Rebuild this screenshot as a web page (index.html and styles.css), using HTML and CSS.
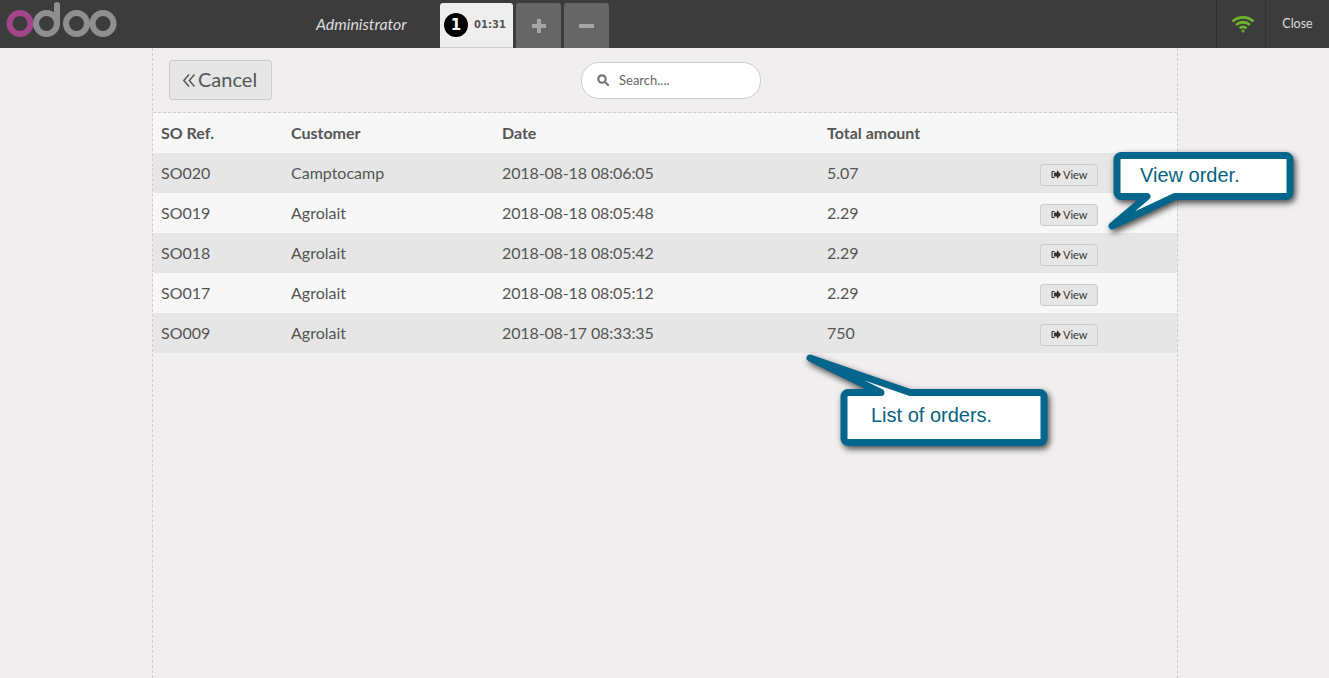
FILE: index.html
```html
<!DOCTYPE html>
<html lang="en">
<head>
<meta charset="UTF-8" />
<title>Orders</title>
<link rel="stylesheet" href="styles.css">
</head>
<body>

<header class="topbar">
  <svg class="logo" width="120" height="48" viewBox="0 0 120 48">
    <circle cx="20" cy="23.500" r="10.500" fill="none" stroke="#a24689" stroke-width="6"/>
    <circle cx="46.500" cy="23.500" r="10.500" fill="none" stroke="#8f8f8f" stroke-width="6"/>
    <line x1="57" y1="24" x2="57" y2="5" stroke="#8f8f8f" stroke-width="6" stroke-linecap="round"/>
    <circle cx="76.500" cy="23.500" r="10.500" fill="none" stroke="#8f8f8f" stroke-width="6"/>
    <circle cx="103" cy="23.500" r="10.500" fill="none" stroke="#8f8f8f" stroke-width="6"/>
  </svg>
  <span class="username">Administrator</span>
  <div class="tabs">
    <div class="tab tab-active">
      <span class="tab-num">1</span>
      <span class="tab-time">01:31</span>
    </div>
    <div class="tab tab-btn">
      <svg width="14" height="14" viewBox="0 0 14 14"><path d="M5 0h4v5h5v4H9v5H5V9H0V5h5z" fill="#a5a5a5"/></svg>
    </div>
    <div class="tab tab-btn">
      <svg width="15" height="14" viewBox="0 0 15 14"><path d="M0 5h15v4H0z" fill="#a5a5a5"/></svg>
    </div>
  </div>
  <div class="status">
    <svg width="24" height="18" viewBox="0 0 24 18" fill="none" stroke="#6bb52c" stroke-width="2.800">
      <path d="M1.500 6.500c6-5.500 15-5.500 21 0"/>
      <path d="M5 10c4-3.700 10-3.700 14 0"/>
      <path d="M8.500 13.300c2-1.800 5-1.800 7 0"/>
      <circle cx="12" cy="16" r="1.500" fill="#6bb52c" stroke="none"/>
    </svg>
  </div>
  <div class="close">Close</div>
</header>

<main class="screen">
  <div class="screen-top">
    <button class="btn-cancel">
      <svg width="12" height="13" viewBox="0 0 12 13" fill="none" stroke="#555" stroke-width="1.500"><path d="M6 .5.800 6.500 6 12.500M11.500.5 6.300 6.500l5.200 6"/></svg>
      <span>Cancel</span>
    </button>
    <div class="search">
      <svg width="12" height="12" viewBox="0 0 12 12" fill="none" stroke="#777" stroke-width="2.200"><circle cx="5" cy="5" r="3.700"/><path d="m8 8 3.200 3.200" stroke-linecap="round"/></svg>
      <span>Search....</span>
    </div>
  </div>

  <table class="orders">
    <thead>
      <tr><th class="c-ref">SO Ref.</th><th class="c-cust">Customer</th><th class="c-date">Date</th><th class="c-total">Total amount</th><th></th></tr>
    </thead>
    <tbody>
      <tr><td>SO020</td><td>Camptocamp</td><td>2018-08-18 08:06:05</td><td>5.07</td>
        <td><button class="btn-view"><svg class="ico-view" width="10" height="9" viewBox="0 0 10 9"><path d="M3.500 1H1.500a1 1 0 0 0-1 1v5a1 1 0 0 0 1 1h2V7H1.700V2h1.800zM6 0l4 4.500L6 9V6.500H3v-4h3z" fill="#333"/></svg>View</button></td></tr>
      <tr><td>SO019</td><td>Agrolait</td><td>2018-08-18 08:05:48</td><td>2.29</td>
        <td><button class="btn-view"><svg class="ico-view" width="10" height="9" viewBox="0 0 10 9"><path d="M3.500 1H1.500a1 1 0 0 0-1 1v5a1 1 0 0 0 1 1h2V7H1.700V2h1.800zM6 0l4 4.500L6 9V6.500H3v-4h3z" fill="#333"/></svg>View</button></td></tr>
      <tr><td>SO018</td><td>Agrolait</td><td>2018-08-18 08:05:42</td><td>2.29</td>
        <td><button class="btn-view"><svg class="ico-view" width="10" height="9" viewBox="0 0 10 9"><path d="M3.500 1H1.500a1 1 0 0 0-1 1v5a1 1 0 0 0 1 1h2V7H1.700V2h1.800zM6 0l4 4.500L6 9V6.500H3v-4h3z" fill="#333"/></svg>View</button></td></tr>
      <tr><td>SO017</td><td>Agrolait</td><td>2018-08-18 08:05:12</td><td>2.29</td>
        <td><button class="btn-view"><svg class="ico-view" width="10" height="9" viewBox="0 0 10 9"><path d="M3.500 1H1.500a1 1 0 0 0-1 1v5a1 1 0 0 0 1 1h2V7H1.700V2h1.800zM6 0l4 4.500L6 9V6.500H3v-4h3z" fill="#333"/></svg>View</button></td></tr>
      <tr><td>SO009</td><td>Agrolait</td><td>2018-08-17 08:33:35</td><td>750</td>
        <td><button class="btn-view"><svg class="ico-view" width="10" height="9" viewBox="0 0 10 9"><path d="M3.500 1H1.500a1 1 0 0 0-1 1v5a1 1 0 0 0 1 1h2V7H1.700V2h1.800zM6 0l4 4.500L6 9V6.500H3v-4h3z" fill="#333"/></svg>View</button></td></tr>
    </tbody>
  </table>
</main>

<!-- annotation callouts over the page -->
<svg class="callouts" width="1329" height="678" viewBox="0 0 1329 678">
  <path class="callout" d="M1121 155.500h165a4 4 0 0 1 4 4v33a4 4 0 0 1-4 4H1175L1112 226l35-29.500h-26a4 4 0 0 1-4-4v-33a4 4 0 0 1 4-4z"/>
  <text class="callout-text" x="1140" y="182">View order.</text>
  <path class="callout" d="M881 392.500 810 358l100 34.500h130a4 4 0 0 1 4 4v42a4 4 0 0 1-4 4H848a4 4 0 0 1-4-4v-42a4 4 0 0 1 4-4z"/>
  <text class="callout-text" x="871" y="422">List of orders.</text>
</svg>

</body>
</html>
```

FILE: styles.css
```css
/* page */
html, body { margin: 0; padding: 0; height: 100%; overflow: hidden; }
body { background: #f0eeee; font-family: Lato, "Open Sans", sans-serif; color: #555; }

/* top bar */
.topbar { display: flex; align-items: stretch; height: 48px; background: #3c3c3c; }
.logo { flex: none; display: block; }
.username { margin-left: 196px; width: 124px; padding-bottom: 2px; align-self: center; font-size: 15.900px; font-style: italic; color: #ddd; }
.tabs { display: flex; gap: 3px; padding-top: 3px; }
.tab { display: flex; align-items: center; justify-content: center; border-radius: 3px 3px 0 0; }
.tab-active { width: 73px; gap: 6px; padding-right: 3px; box-sizing: border-box; background: #eee; border-bottom: 1px solid #ccc; }
.tab-num { width: 24px; height: 24px; border-radius: 50%; background: #000; color: #fff; font: bold 15px/24px "DejaVu Sans", sans-serif; text-align: center; }
.tab-time { margin-top: -2px; font: bold 10px "DejaVu Sans", sans-serif; color: #555; }
.tab-btn { width: 45px; background: #666; }
.status { margin-left: auto; width: 50px; padding-left: 4px; box-sizing: border-box; display: flex; align-items: center; justify-content: center; border-left: 1px solid #2f2f2f; border-right: 1px solid #2f2f2f; }
.close { width: 63px; line-height: 47px; text-align: center; font-size: 12.500px; color: #ddd; }

/* centered screen with dashed sides */
.screen { box-sizing: border-box; width: 1026px; height: 630px; margin-left: 152px; border-left: 1px dashed #ccc; border-right: 1px dashed #ccc; }
.screen-top { display: flex; align-items: center; height: 64px; padding-left: 16px; border-bottom: 1px dashed #ccc; }
.btn-cancel { display: flex; align-items: center; gap: 3px; width: 103px; height: 40px; padding: 0 0 0 13px; box-sizing: border-box; background: #e6e6e6; border: 1px solid #ccc; border-radius: 3px; font: 20px Lato, sans-serif; color: #555; }
.btn-cancel span { margin-top: -2px; }
.search { display: flex; align-items: center; gap: 10px; box-sizing: border-box; width: 180px; height: 37px; margin-left: 309px; padding-left: 15px; background: #fff; border: 1px solid #ccc; border-radius: 18px; font-size: 13px; color: #666; }

/* orders table */
.orders { width: 100%; border-collapse: collapse; table-layout: fixed; font-size: 16px; }
.orders th, .orders td { box-sizing: border-box; height: 40px; padding: 0 0 2px 8px; text-align: left; }
.orders th { font-weight: bold; background: #f7f7f7; }
.orders tbody tr:nth-child(odd) { background: #e6e6e6; }
.orders tbody tr:nth-child(even) { background: #f7f7f7; }
.orders td:nth-child(3) { letter-spacing: -.12px; }
.c-ref { width: 130px; }
.c-cust { width: 211px; }
.c-date { width: 325px; }
.c-total { width: 213px; }
.btn-view { display: flex; align-items: center; gap: 2px; width: 58px; height: 22px; margin-top: 5px; padding: 0 0 0 10px; box-sizing: border-box; background: #e6e6e6; border: 1px solid #ccc; border-radius: 3px; font: 11px Lato, sans-serif; color: #333; }
.ico-view { flex: none; }

/* annotations */
.callouts { position: absolute; left: 0; top: 0; pointer-events: none; }
.callout { fill: #fff; stroke: #04668c; stroke-width: 7; stroke-linejoin: round; filter: drop-shadow(2px 3px 3px rgba(0, 0, 0, .7)); }
.callout-text { font: 20px "Liberation Sans", Arial, sans-serif; fill: #04637f; }
```
